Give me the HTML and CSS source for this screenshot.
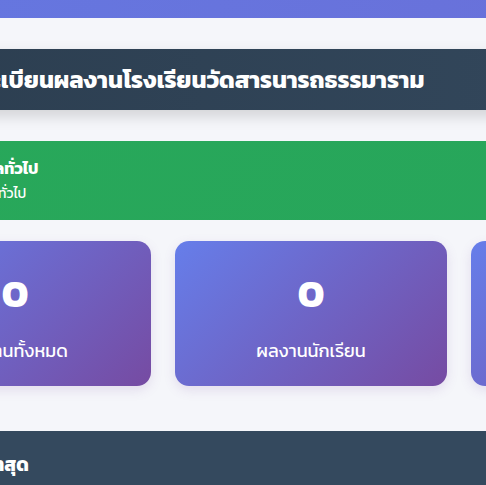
FILE: index.html
```html
<!DOCTYPE html>
<html lang="th">
<head>
    <meta charset="UTF-8">
    <meta name="viewport" content="width=device-width, initial-scale=1.0">
    <title>ระบบทะเบียนผลงาน</title>
    <link rel="stylesheet" href="styles.css">
</head>
<body>
    <div class="page">
        <div class="topbar"></div>

        <header class="site-header">
            <h1>ระบบทะเบียนผลงานโรงเรียนวัดสารนารถธรรมาราม</h1>
        </header>

        <section class="notice">
            <h3>ข้อมูลทั่วไป</h3>
            <p>ข้อมูลทั่วไป</p>
        </section>

        <div class="stats">
            <div class="stat-card">
                <div class="stat-number">0</div>
                <div class="stat-label">ผลงานทั้งหมด</div>
            </div>
            <div class="stat-card">
                <div class="stat-number">0</div>
                <div class="stat-label">ผลงานนักเรียน</div>
            </div>
            <div class="stat-card">
                <div class="stat-number">0</div>
                <div class="stat-label">ผลงานครู</div>
            </div>
        </div>

        <section class="latest">
            <h2>ผลงานล่าสุด</h2>
        </section>
    </div>
</body>
</html>
```

FILE: styles.css
```css
body {
    margin: 0;
    padding: 0;
    background: #f5f6fa;
    font-family: "Kanit", "Noto Sans Thai", "Noto Sans", sans-serif;
    color: white;
    overflow: hidden;
}

.page {
    width: 900px;
    margin-left: -121px;
}

.topbar {
    height: 18px;
    background: linear-gradient(90deg, #6577e0, #6a6fd8);
}

.site-header {
    margin-top: 31px;
    height: 61px;
    display: flex;
    align-items: center;
    padding-left: 49px;
    background: linear-gradient(90deg, #2c3e50, #34495e);
    box-shadow: 0 6px 14px rgba(0, 0, 0, 0.15);
}

.site-header h1 {
    margin: 0;
    font-size: 23.7px;
    font-weight: 700;
}

.notice {
    margin-top: 31px;
    height: 79px;
    box-sizing: border-box;
    padding: 16px 20px 0 86px;
    background: linear-gradient(135deg, #28a85a, #27a55b);
    border-radius: 8px;
}

.notice h3 {
    margin: 0 0 5px;
    font-size: 16px;
    line-height: 22px;
    font-weight: 700;
}

.notice p {
    margin: 0;
    font-size: 14px;
    line-height: 20px;
}

.stats {
    margin-top: 21px;
    display: grid;
    grid-template-columns: repeat(3, 272px);
    gap: 24px;
}

.stat-card {
    height: 145px;
    box-sizing: border-box;
    padding-top: 9px;
    border-radius: 14px;
    background: linear-gradient(135deg, #667eea, #764ba2);
    display: flex;
    flex-direction: column;
    align-items: center;
    justify-content: center;
    box-shadow: 0 4px 12px rgba(118, 75, 162, 0.15);
}

.stat-number {
    font-size: 40px;
    font-weight: 700;
    line-height: 1;
}

.stat-label {
    margin-top: 24px;
    font-size: 18px;
}

.latest {
    margin-top: 45px;
    height: 80px;
    padding: 19px 50px;
    box-sizing: border-box;
    background: #34495e;
}

.latest h2 {
    margin: 0;
    font-size: 19px;
    font-weight: 700;
}
```
